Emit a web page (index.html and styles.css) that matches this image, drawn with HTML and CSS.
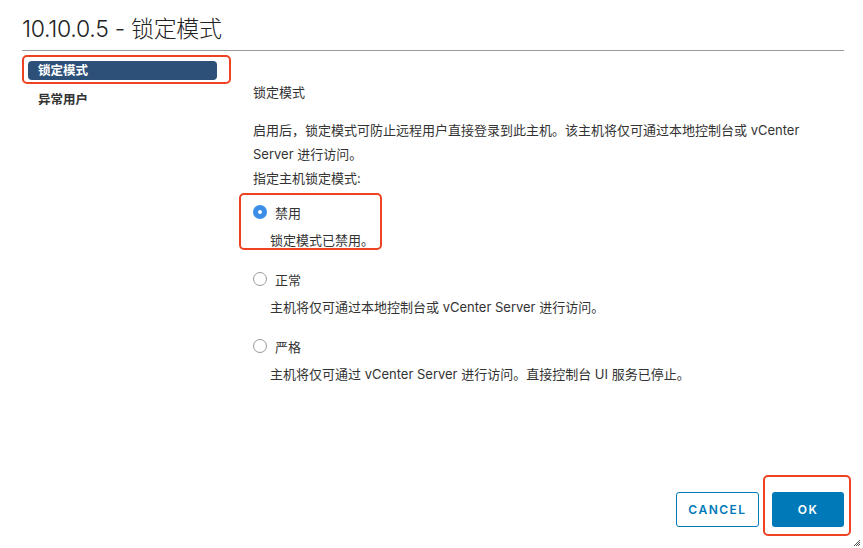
FILE: index.html
```html
<!DOCTYPE html>
<html lang="zh">
<head>
  <meta charset="UTF-8">
  <title>10.10.0.5 - 锁定模式</title>
  <link rel="stylesheet" href="styles.css">
</head>
<body>
  <div class="dialog">
    <div class="dialog-header">
      <h1 class="dialog-title">10.10.0.5 - 锁定模式</h1>
    </div>

    <div class="dialog-body">
      <div class="sidebar">
        <div class="mark mark-nav">
          <div class="nav-item active">锁定模式</div>
        </div>
        <div class="nav-item">异常用户</div>
      </div>

      <div class="content">
        <div class="section-title">锁定模式</div>
        <p class="text intro">启用后，锁定模式可防止远程用户直接登录到此主机。该主机将仅可通过本地控制台或 vCenter Server 进行访问。</p>
        <p class="text">指定主机锁定模式:</p>

        <div class="options">
          <div class="option">
            <span class="mark mark-option"></span>
            <label class="radio-row"><span class="radio checked"></span>禁用</label>
            <div class="option-desc">锁定模式已禁用。</div>
          </div>
          <div class="option">
            <label class="radio-row"><span class="radio"></span>正常</label>
            <div class="option-desc">主机将仅可通过本地控制台或 vCenter Server 进行访问。</div>
          </div>
          <div class="option">
            <label class="radio-row"><span class="radio"></span>严格</label>
            <div class="option-desc">主机将仅可通过 vCenter Server 进行访问。直接控制台 UI 服务已停止。</div>
          </div>
        </div>
      </div>
    </div>

    <div class="dialog-footer">
      <button class="btn btn-outline">CANCEL</button>
      <div class="btn-wrap">
        <span class="mark mark-ok"></span>
        <button class="btn btn-primary">OK</button>
      </div>
    </div>

    <svg class="resize" width="8" height="8" viewBox="0 0 8 8">
      <path d="M1 7 L7 1 M3 7 L7 3 M5 7 L7 5" stroke="#555" stroke-width="1"/>
    </svg>
  </div>
</body>
</html>
```

FILE: styles.css
```css
* { box-sizing: border-box; }
body { margin: 0; background: #fff; color: #333; font-family: Inter, "Noto Sans CJK SC", sans-serif; font-size: 13px; }

.dialog { position: relative; height: 548px; display: flex; flex-direction: column; padding: 0 19px 0 22px; }

.dialog-header { border-bottom: 1px solid #9a9a9a; height: 51px; }
.dialog-title { margin: 0; padding-top: 14px; font-size: 23px; font-weight: 300; line-height: 30px; color: #222; letter-spacing: -0.3px; }

.dialog-body { flex: 1; display: flex; }

.sidebar { width: 209px; margin-right: 22px; padding-top: 4px; }
.mark { border: 2px solid #ee4323; border-radius: 5px; }
.mark-nav { padding: 4px 12px 2px 4px; margin-bottom: 6px; }
.nav-item { height: 19px; line-height: 19px; padding-left: 16px; font-size: 12.5px; font-weight: 700; color: #333; }
.nav-item.active { background: #2d5078; color: #fff; border-radius: 4px; padding-left: 10px; }

.content { flex: 1; padding-top: 29px; }
.section-title { line-height: 24px; }
.text { margin: 0; line-height: 24px; max-width: 560px; }
.intro { margin-top: 14px; }

.options { margin-top: 10px; }
.option { position: relative; margin-bottom: 15px; }
.mark-option { position: absolute; top: -7px; left: -14px; width: 143px; height: 57px; }
.radio-row { display: flex; align-items: center; height: 24px; }
.radio { width: 14px; height: 14px; border: 1px solid #9a9a9a; border-radius: 50%; background: #fff; margin-right: 8px; }
.radio.checked { border: none; box-shadow: inset 0 0 0 5px #3b8ee8; background: #fff; }
.option-desc { margin-top: 4px; padding-left: 17px; line-height: 24px; }

.dialog-footer { display: flex; justify-content: flex-end; align-items: center; gap: 13px; padding-bottom: 21px; }
.btn { height: 35px; border-radius: 3px; font-family: Inter, sans-serif; font-size: 12px; font-weight: 600; letter-spacing: 1.5px; cursor: pointer; }
.btn-outline { width: 83px; background: #fff; color: #0079b8; border: 1px solid #0079b8; }
.btn-primary { width: 72px; background: #0079b8; color: #fff; border: none; }
.btn-wrap { position: relative; display: flex; }
.mark-ok { position: absolute; top: -17px; left: -9px; right: -7px; bottom: -9px; }

.resize { position: absolute; right: 2px; bottom: 1px; }
```
